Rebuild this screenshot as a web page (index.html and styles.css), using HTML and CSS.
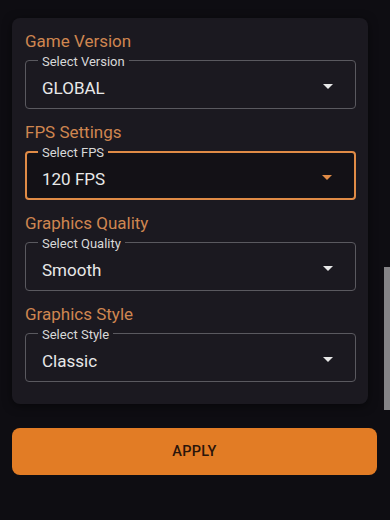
FILE: index.html
```html
<!DOCTYPE html>
<html lang="en">
<head>
    <meta charset="UTF-8">
    <meta name="viewport" content="width=device-width, initial-scale=1.0">
    <title>Graphics Settings</title>
    <link rel="stylesheet" href="styles.css">
</head>
<body>
    <div class="card">
        <h3 class="section-title">Game Version</h3>
        <div class="field">
            <span class="field-label">Select Version</span>
            <span class="field-value">GLOBAL</span>
            <span class="arrow"></span>
        </div>

        <h3 class="section-title">FPS Settings</h3>
        <div class="field active">
            <span class="field-label">Select FPS</span>
            <span class="field-value">120 FPS</span>
            <span class="arrow"></span>
        </div>

        <h3 class="section-title">Graphics Quality</h3>
        <div class="field">
            <span class="field-label">Select Quality</span>
            <span class="field-value">Smooth</span>
            <span class="arrow"></span>
        </div>

        <h3 class="section-title">Graphics Style</h3>
        <div class="field">
            <span class="field-label">Select Style</span>
            <span class="field-value">Classic</span>
            <span class="arrow"></span>
        </div>
    </div>

    <button class="apply-btn">APPLY</button>

    <!-- scroll indicator on the right edge -->
    <div class="scrollbar"></div>
</body>
</html>
```

FILE: styles.css
```css
html {
    background: #0e0d12;
}
body {
    font-family: Roboto, "Noto Sans", sans-serif;
    margin: 0;
    padding: 18px 0 0 12px;
    color: #e6e6e6;
    height: 520px;
    box-sizing: border-box;
    overflow: hidden;
}
.card {
    width: 356px;
    box-sizing: border-box;
    padding: 12px 12px 22px 13px;
    background: #1b1920;
    border-radius: 8px;
    box-shadow: 0 2px 10px rgba(0, 0, 0, 0.5);
}
.section-title {
    margin: 12px 0 8px;
    font-size: 17px;
    line-height: 22px;
    font-weight: 400;
    color: #cf8650;
}
.section-title:first-child {
    margin-top: 0;
}
.field {
    position: relative;
    height: 49px;
    box-sizing: border-box;
    border: 1px solid #5a595f;
    border-radius: 4px;
    display: flex;
    align-items: center;
    padding: 6px 22px 0 16px;
}
.field.active {
    border: 2px solid #e08b46;
    padding-left: 15px;
    background: #131116;
}
.field-label {
    position: absolute;
    top: -6px;
    left: 12px;
    padding: 0 4px;
    font-size: 13px;
    line-height: 14px;
    color: #d8d8d8;
    background: linear-gradient(#1b1920 50%, transparent 50%);
}
.field.active .field-label {
    top: -7px;
    left: 11px;
}
.field-value {
    flex: 1;
    font-size: 17px;
    color: #e8e8e8;
}
.arrow {
    width: 0;
    height: 0;
    margin-bottom: 2px;
    border-left: 5px solid transparent;
    border-right: 5px solid transparent;
    border-top: 5px solid #e8e8e8;
}
.field.active .arrow {
    border-top-color: #e08b46;
}
.apply-btn {
    display: block;
    width: 365px;
    height: 47px;
    margin-top: 24px;
    background: #e27c25;
    color: #2a150b;
    border: none;
    border-radius: 8px;
    font-family: Roboto, "Noto Sans", sans-serif;
    font-size: 14.5px;
    font-weight: 500;
    letter-spacing: 0.3px;
    cursor: pointer;
}
.scrollbar {
    position: fixed;
    right: 0;
    top: 267px;
    width: 6px;
    height: 143px;
    background: #858487;
}
```
